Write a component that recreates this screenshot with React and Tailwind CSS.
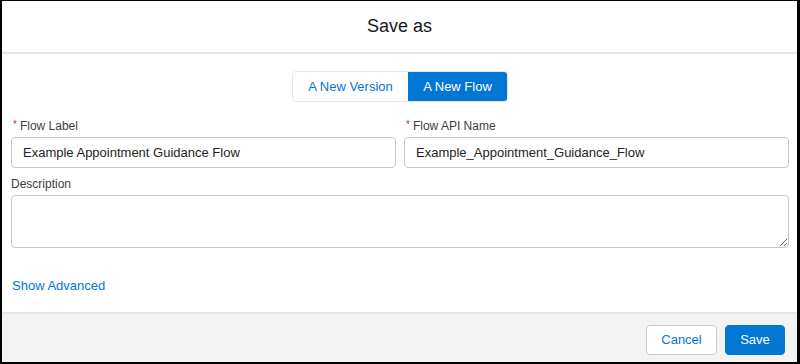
import { useState } from 'react';

// ─── Small pieces ─────────────────────────────────────────────────────────────

function FieldLabel({ children, required }) {
  return (
    <label className="flex items-center text-[12px] leading-[16px] text-[#3e3e3c] mb-[3px]">
      {required && <span className="text-[#c23934] text-[10px] mr-[3px] pl-[2px] -mt-[2px]">*</span>}
      {children}
    </label>
  );
}

function TextInput({ value, onChange }) {
  return (
    <input
      value={value}
      onChange={e => onChange(e.target.value)}
      className="w-full h-[31px] rounded-[4px] border border-[#c9c9c9] bg-white px-[11px] text-[13px] text-[#242424] outline-none"
    />
  );
}

// ─── Component ────────────────────────────────────────────────────────────────

export default function App() {
  const [mode,  setMode]  = useState('flow');
  const [label, setLabel] = useState('Example Appointment Guidance Flow');
  const [api,   setApi]   = useState('Example_Appointment_Guidance_Flow');
  const [desc,  setDesc]  = useState('');

  return (
    <div
      className="w-[800px] h-[364px] flex flex-col bg-white border-black border-t border-l-2 border-r-[3px] border-b-2 overflow-hidden"
      style={{ fontFamily: '"Liberation Sans", Arial, sans-serif' }}
    >
      {/* Header */}
      <div className="h-[53px] shrink-0 flex items-center justify-center border-b-2 border-[#e5e5e5]">
        <h2 className="text-[18px] text-[#181818] pb-[1px]">Save as</h2>
      </div>

      {/* Body */}
      <div className="flex-1 flex flex-col pl-[9px] pr-[8px]">
        <div className="mt-[17px] flex justify-center">
          <div className="flex h-[31px] rounded-[4px] border border-[#e5e5e5] overflow-hidden text-[13px]">
            <button
              onClick={() => setMode('version')}
              className={`w-[115px] ${mode === 'version' ? 'bg-[#0176d3] text-white' : 'bg-white text-[#0176d3]'}`}
            >
              A New Version
            </button>
            <button
              onClick={() => setMode('flow')}
              className={`w-[99px] ${mode === 'flow' ? 'bg-[#0176d3] text-white' : 'bg-white text-[#0176d3]'}`}
            >
              A New Flow
            </button>
          </div>
        </div>

        <div className="mt-[16px] grid grid-cols-2 gap-[8px]">
          <div>
            <FieldLabel required>Flow Label</FieldLabel>
            <TextInput value={label} onChange={setLabel} />
          </div>
          <div>
            <FieldLabel required>Flow API Name</FieldLabel>
            <TextInput value={api} onChange={setApi} />
          </div>
        </div>

        <div className="mt-[8px]">
          <FieldLabel>Description</FieldLabel>
          <textarea
            value={desc}
            onChange={e => setDesc(e.target.value)}
            className="block w-full h-[53px] rounded-[4px] border border-[#c9c9c9] bg-white px-[11px] py-[6px] text-[13px] outline-none"
          />
        </div>

        <div className="mt-[25px]">
          <button className="text-[13px] leading-[16px] text-[#0176d3] pl-[1px]">Show Advanced</button>
        </div>
      </div>

      {/* Footer */}
      <div className="h-[50px] shrink-0 bg-[#f3f3f3] border-t-2 border-[#e5e5e5] flex justify-end items-start gap-[8px] pt-[11px] pr-[12px]">
        <button className="w-[71px] h-[30px] rounded-[4px] border border-[#c9c9c9] bg-white text-[13px] text-[#0176d3]">
          Cancel
        </button>
        <button className="w-[60px] h-[30px] rounded-[4px] border border-[#0176d3] bg-[#0176d3] text-[13px] text-white">
          Save
        </button>
      </div>
    </div>
  );
}
